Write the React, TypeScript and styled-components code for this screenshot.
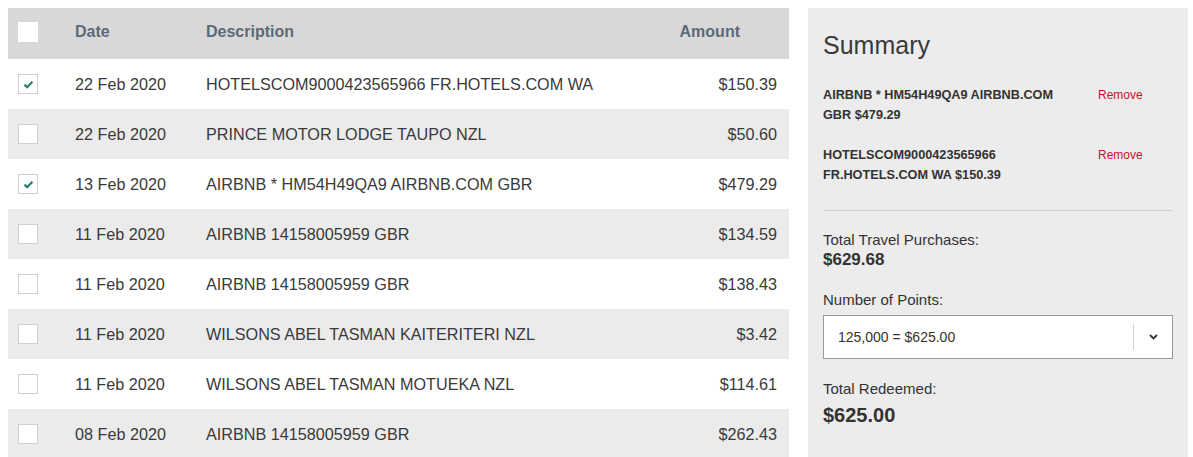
import React from 'react'
import styled, { createGlobalStyle } from 'styled-components'

type Txn = {
  date : string
  description : string
  amount : string
  checked : boolean
}

const txns : Txn[] = [
  { date: '22 Feb 2020', description: 'HOTELSCOM9000423565966 FR.HOTELS.COM WA', amount: '$150.39', checked: true },
  { date: '22 Feb 2020', description: 'PRINCE MOTOR LODGE TAUPO NZL', amount: '$50.60', checked: false },
  { date: '13 Feb 2020', description: 'AIRBNB * HM54H49QA9 AIRBNB.COM GBR', amount: '$479.29', checked: true },
  { date: '11 Feb 2020', description: 'AIRBNB 14158005959 GBR', amount: '$134.59', checked: false },
  { date: '11 Feb 2020', description: 'AIRBNB 14158005959 GBR', amount: '$138.43', checked: false },
  { date: '11 Feb 2020', description: 'WILSONS ABEL TASMAN KAITERITERI NZL', amount: '$3.42', checked: false },
  { date: '11 Feb 2020', description: 'WILSONS ABEL TASMAN MOTUEKA NZL', amount: '$114.61', checked: false },
  { date: '08 Feb 2020', description: 'AIRBNB 14158005959 GBR', amount: '$262.43', checked: false },
]

const selected = [
  { text: 'AIRBNB * HM54H49QA9 AIRBNB.COM GBR $479.29' },
  { text: 'HOTELSCOM9000423565966 FR.HOTELS.COM WA $150.39' },
]

const GlobalStyle = createGlobalStyle`
  body {
    margin:0;
    background:#fff;
    font-family: "Liberation Sans", Arial, sans-serif;
    color:#333;
  }
`

function Check ({checked, header} : {checked : boolean, header? : boolean}) {
  return (
    <CheckBox header={header}>
      {checked && (
        <svg width="11" height="9" viewBox="0 0 11 9">
          <path d="M1.5 4.6 L4.2 7.2 L9.4 1.8" fill="none" stroke="#2a7f6f" strokeWidth="2.2" />
        </svg>
      )}
    </CheckBox>
  )
}

function App () {
  return (
    <>
      <GlobalStyle />
      <Page>
        <Table>
          <HeaderRow>
            <Cell><Check checked={false} header /></Cell>
            <HeadCell>Date</HeadCell>
            <HeadCell>Description</HeadCell>
            <HeadCell align="right">Amount</HeadCell>
          </HeaderRow>
          {txns.map((t, i) => (
            <Row key={i} shaded={i % 2 === 1}>
              <Cell><Check checked={t.checked} /></Cell>
              <Cell>{t.date}</Cell>
              <Cell>{t.description}</Cell>
              <Cell align="right">{t.amount}</Cell>
            </Row>
          ))}
        </Table>

        <Summary>
          <Title>Summary</Title>
          <ItemList>
            {selected.map((s, i) => (
              <Item key={i}>
                <ItemText>{s.text}</ItemText>
                <RemoveLink>Remove</RemoveLink>
              </Item>
            ))}
          </ItemList>
          <Divider />
          <Label>Total Travel Purchases:</Label>
          <Value>$629.68</Value>
          <Label spaced>Number of Points:</Label>
          <Select>
            <SelectValue>125,000 = $625.00</SelectValue>
            <SelectArrow>
              <svg width="9" height="6" viewBox="0 0 9 6">
                <path d="M1 1 L4.5 4.5 L8 1" fill="none" stroke="#333" strokeWidth="1.8" />
              </svg>
            </SelectArrow>
          </Select>
          <Label spaced>Total Redeemed:</Label>
          <BigValue>$625.00</BigValue>
        </Summary>
      </Page>
    </>
  )
}

const Page = styled.div`
  display:flex;
  align-items:flex-start;
  gap:19px;
  padding:8px 0 0 8px;
  height:449px;
  overflow:hidden;
`

const Table = styled.div`
  width:781px;
  flex-shrink:0;
`

const HeaderRow = styled.div`
  display:grid;
  grid-template-columns: 67px 131px 1fr 120px;
  align-items:center;
  height:51px;
  padding:0 49px 3px 0;
  box-sizing:border-box;
  background:#d8d8d8;
`

const Row = styled.div<{shaded : boolean}>`
  display:grid;
  grid-template-columns: 67px 131px 1fr 120px;
  align-items:center;
  height:50px;
  padding-right:12px;
  box-sizing:border-box;
  background:${(p) => p.shaded ? '#ebebeb' : '#fff'};
  font-size:16.2px;
  color:#3a3a3a;
`

const Cell = styled.div<{align? : string}>`
  white-space:nowrap;
  display:flex;
  justify-content:${(p) => p.align === 'right' ? 'flex-end' : 'flex-start'};
  align-items:center;

  &:first-child {
    padding-left:10px;
  }
`

const HeadCell = styled(Cell)`
  font-size:16px;
  font-weight:bold;
  color:#5b6a78;
`

const CheckBox = styled.div<{header? : boolean}>`
  width:20px;
  height:20px;
  box-sizing:border-box;
  background:#fff;
  border:1px solid ${(p) => p.header ? '#fff' : '#d0d0d0'};
  display:flex;
  align-items:center;
  justify-content:center;
`

const Summary = styled.div`
  width:380px;
  height:470px;
  flex-shrink:0;
  box-sizing:border-box;
  background:#ececec;
  padding:22px 15px 0 15px;
`

const Title = styled.h2`
  margin:0;
  font-size:25px;
  font-weight:normal;
  line-height:30px;
  color:#3a3a3a;
`

const ItemList = styled.div`
  display:flex;
  flex-direction:column;
  gap:20px;
  margin-top:25px;
`

const Item = styled.div`
  display:flex;
  align-items:flex-start;
  gap:25px;
`

const ItemText = styled.div`
  width:250px;
  font-size:12.7px;
  font-weight:bold;
  line-height:20px;
  color:#333;
`

const RemoveLink = styled.a`
  font-size:12px;
  line-height:20px;
  color:#c8102e;
  cursor:pointer;
`

const Divider = styled.hr`
  margin:25px 0 0 0;
  border:none;
  border-top:1px solid #cfcfcf;
  height:0;
`

const Label = styled.div<{spaced? : boolean}>`
  margin-top:${(p) => p.spaced ? '20px' : '19px'};
  font-size:15px;
  line-height:20px;
  color:#333;
`

const Value = styled.div`
  font-size:17px;
  font-weight:bold;
  line-height:20px;
  color:#333;
`

const BigValue = styled.div`
  margin-top:4px;
  font-size:20px;
  font-weight:bold;
  line-height:24px;
  color:#333;
`

const Select = styled.div`
  display:flex;
  align-items:center;
  height:44px;
  margin-top:5px;
  box-sizing:border-box;
  background:#fff;
  border:1px solid #999;
`

const SelectValue = styled.div`
  flex:1;
  padding-left:14px;
  font-size:14px;
  color:#333;
`

const SelectArrow = styled.div`
  width:38px;
  height:26px;
  border-left:1px solid #d4d4d4;
  display:flex;
  align-items:center;
  justify-content:center;
`

export default App
